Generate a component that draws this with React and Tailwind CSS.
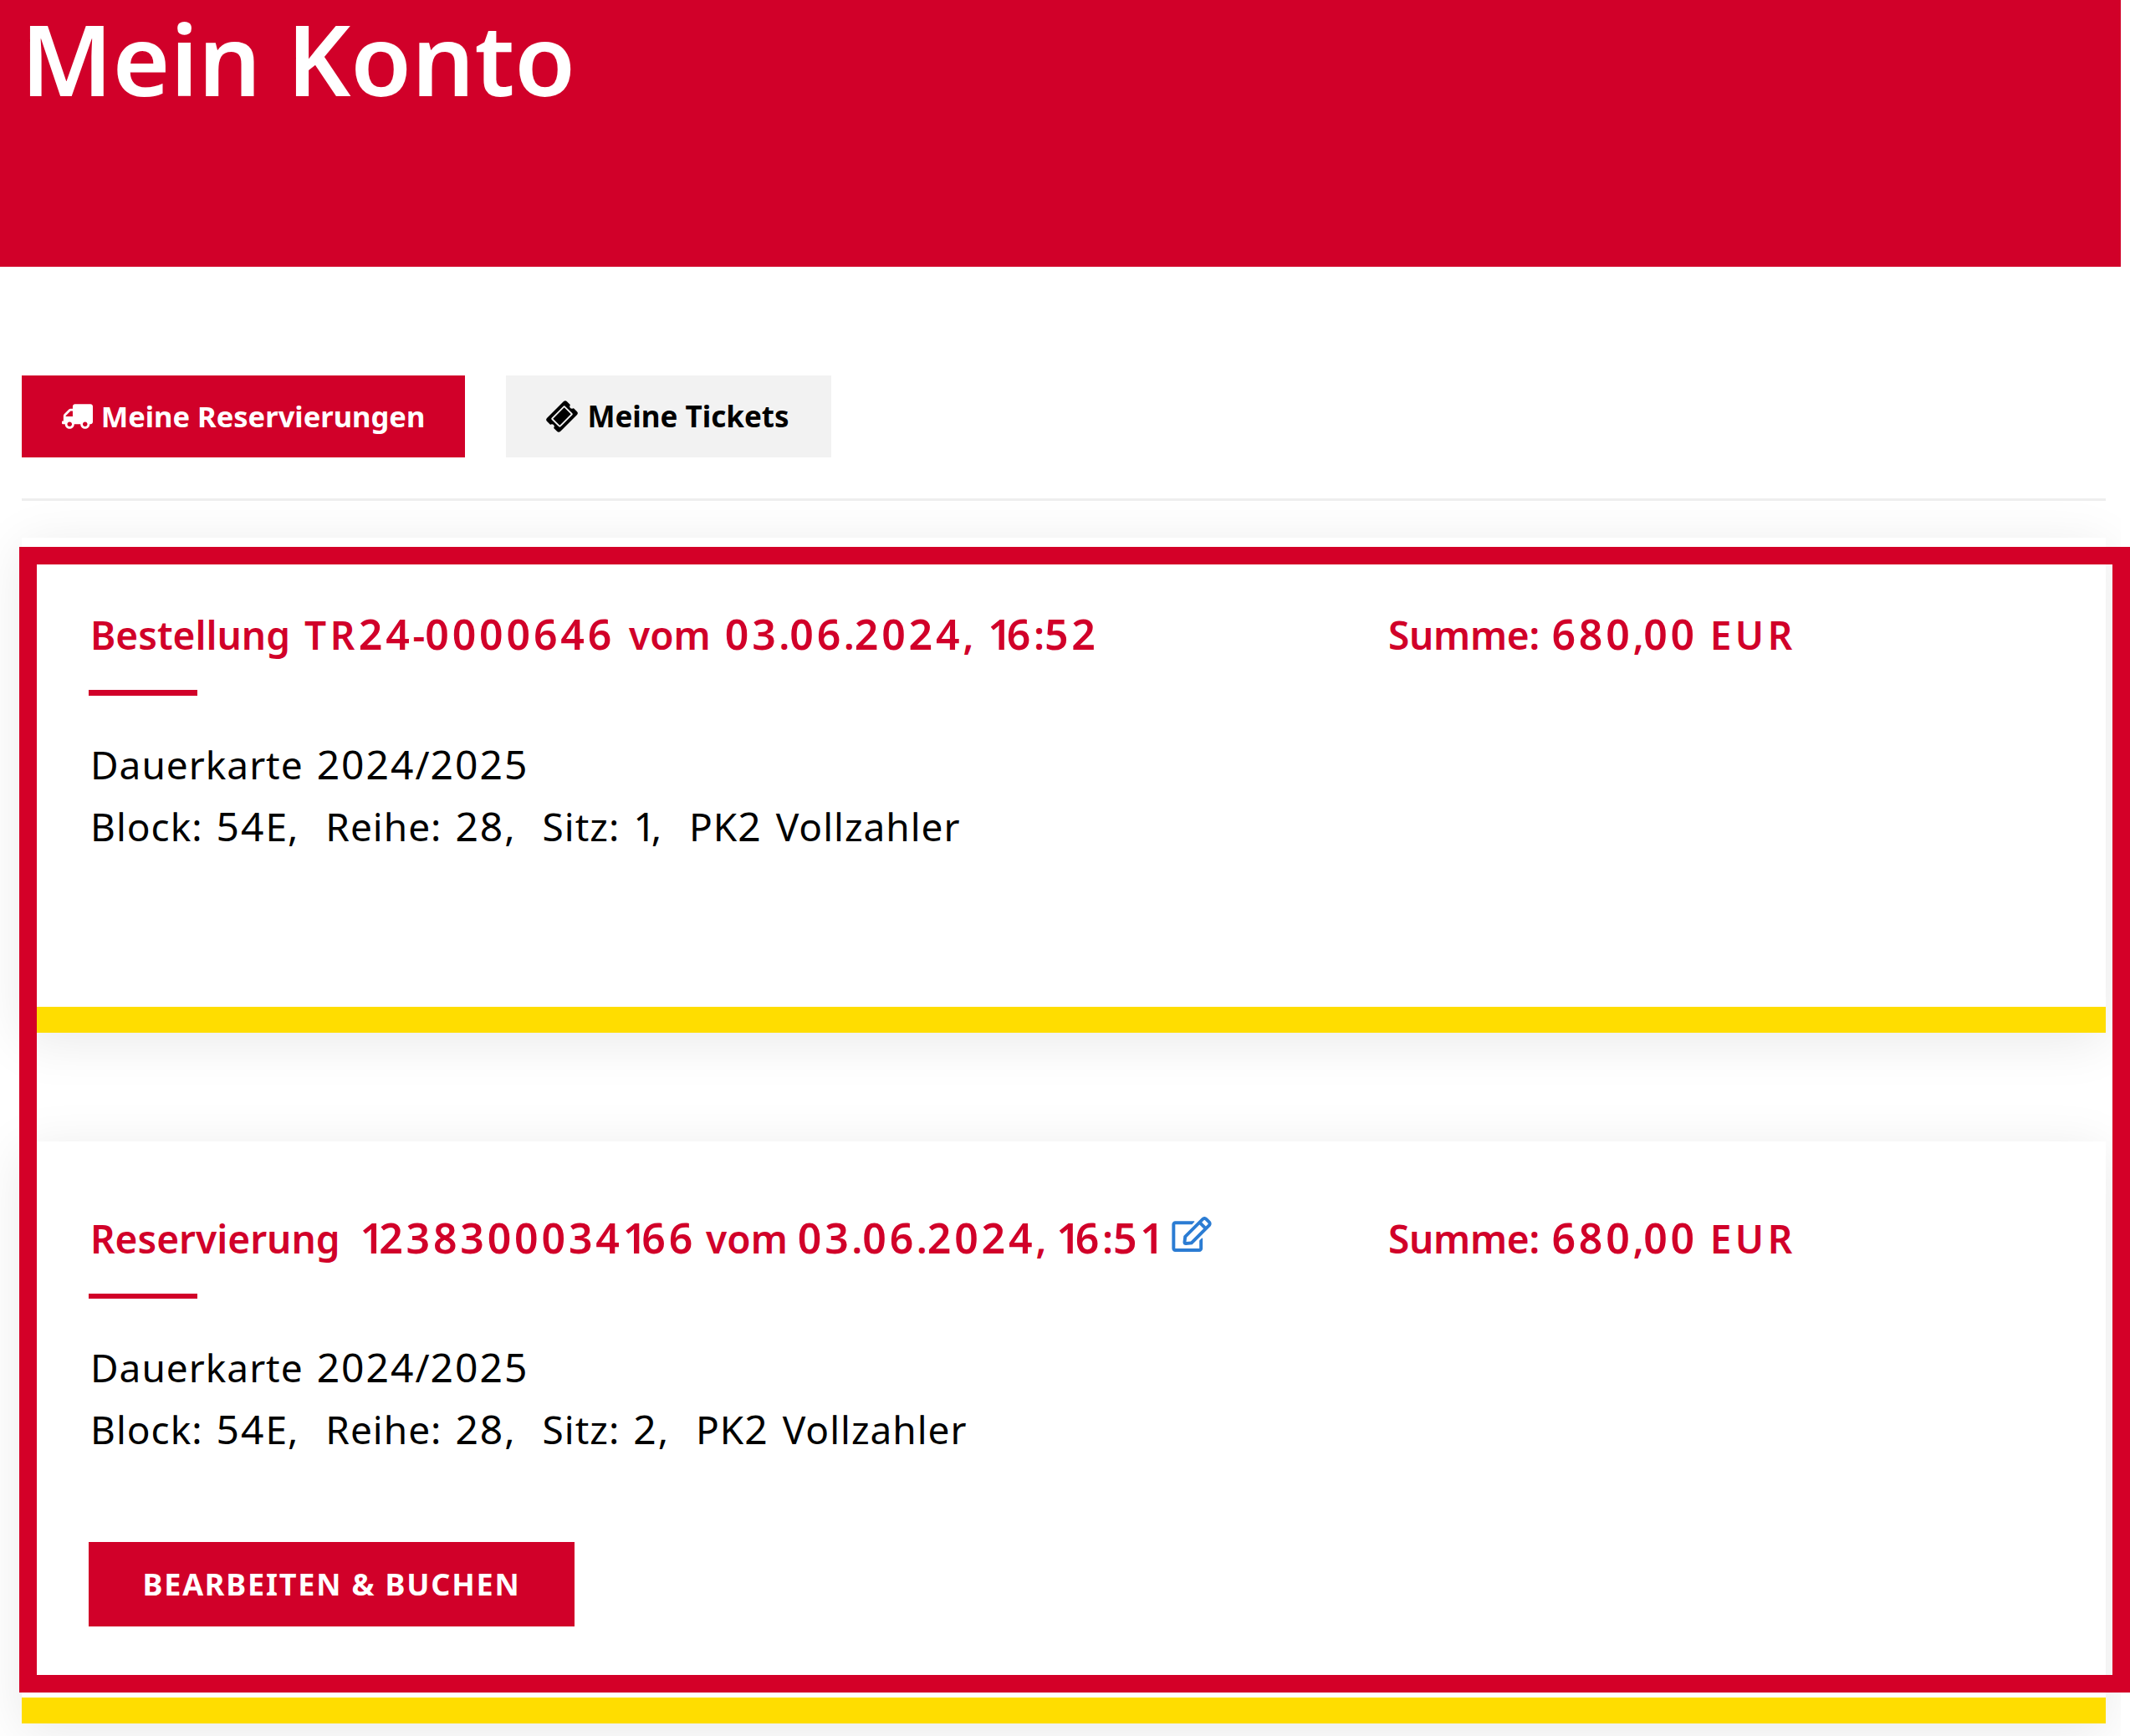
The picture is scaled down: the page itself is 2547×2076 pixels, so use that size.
import React from "react";
import { FaTruck, FaTicketAlt, FaRegEdit } from "react-icons/fa";

const font = { fontFamily: '"Noto Sans", sans-serif' };

// The reference font has larger, wider figures than Noto Sans, with a narrow "1".
function Figures({ text, digitClass, oneClass, capsClass }) {
  return text.split(/(1|TR|EUR|[02-9]+)/).map((part, i) => {
    if (i % 2 === 0) return part;
    const cls = part === "1" ? oneClass : part === "EUR" || part === "TR" ? capsClass : digitClass;
    return (
      <span key={i} className={cls}>
        {part}
      </span>
    );
  });
}

function Heading({ text }) {
  return (
    <Figures
      text={text}
      digitClass="text-[50px] tracking-[3.8px]"
      oneClass="text-[50px] tracking-[-6px]"
      capsClass="tracking-[4.5px]"
    />
  );
}

function Body({ text }) {
  return (
    <Figures
      text={text}
      digitClass="text-[48px] tracking-[2px]"
      oneClass="text-[48px] tracking-[-6px]"
      capsClass="tracking-[1px]"
    />
  );
}

function OrderCard({ title, icon, seat, ruleClass, heightClass, titleClass, children }) {
  return (
    <section className={`box-border bg-white border-b-[31px] border-[#ffdd00] pl-20 pt-20 shadow-[0_10px_60px_rgba(0,0,0,0.09)] ${heightClass}`}>
      <div className="flex h-[70px] items-center">
        <h2 className={`ml-[2px] flex w-[1552px] items-center whitespace-pre text-[46px] font-semibold leading-[70px] text-[#d10029] ${titleClass}`}>
          <span><Heading text={title} /></span>
          {icon}
        </h2>
        <p className="whitespace-pre text-[46px] font-semibold leading-[70px] tracking-[-0.3px] [word-spacing:3px] text-[#d10029]">
          <Heading text="Summe: 680,00 EUR" />
        </p>
      </div>
      <div className={`mt-8 w-[130px] bg-[#d10029] ${ruleClass}`} />
      <div className="ml-[2px] mt-[45px] text-[46px] leading-[74px] tracking-[1px] [word-spacing:3px] text-black">
        <p><Body text="Dauerkarte 2024/2025" /></p>
        <p className="whitespace-pre"><Body text={seat} /></p>
      </div>
      {children}
    </section>
  );
}

export default function App() {
  return (
    <div className="relative h-[2076px] w-[2547px] overflow-hidden bg-white" style={font}>
      <div className="h-full w-[2536px] overflow-hidden">
        <header className="h-[319px] bg-[#d10029] pl-[25px]">
          <h1 className="text-[118px] font-semibold leading-[140px] text-white">Mein Konto</h1>
        </header>

        <main className="pl-[26px] pr-[18px]">
          <nav className="mt-[130px] flex gap-[49px] border-b-[3px] border-[#eeeeee] pb-[49px]">
            <a className="flex h-[98px] w-[530px] items-center justify-center gap-[10px] bg-[#d10029] text-[34.5px] font-bold text-white">
              <FaTruck className="h-[30px] w-[37px] -scale-x-100" />
              Meine Reservierungen
            </a>
            <a className="flex h-[98px] w-[389px] items-center justify-center gap-[13px] bg-[#f2f2f2] text-[35px] font-bold text-black">
              <FaTicketAlt className="h-[34px] w-[34px] -rotate-45" />
              Meine Tickets
            </a>
          </nav>

          <div className="mt-[44px] flex flex-col gap-[130px]">
            <OrderCard
              title="Bestellung TR24-0000646 vom 03.06.2024, 16:52"
              seat="Block: 54E,  Reihe: 28,  Sitz: 1,  PK2 Vollzahler"
              ruleClass="h-[7px]"
              heightClass="h-[592px]"
              titleClass="[word-spacing:5px]"
            />
            <OrderCard
              title="Reservierung  1238300034166 vom 03.06.2024, 16:51"
              icon={<FaRegEdit className="mb-[8px] ml-[14px] h-[42px] w-[50px] text-[#2b7cd3]" />}
              seat="Block: 54E,  Reihe: 28,  Sitz: 2,  PK2 Vollzahler"
              ruleClass="h-[6px]"
              heightClass="h-[696px]"
              titleClass=""
            >
              <button className="mt-[98px] h-[101px] w-[581px] bg-[#d10029] text-[36px] font-bold uppercase tracking-[1.8px] text-white">
                Bearbeiten &amp; Buchen
              </button>
            </OrderCard>
          </div>
        </main>
      </div>

      <div className="pointer-events-none absolute left-[23px] right-0 top-[654px] h-[1370px] border-[21px] border-[#d40028]" />
    </div>
  );
}
